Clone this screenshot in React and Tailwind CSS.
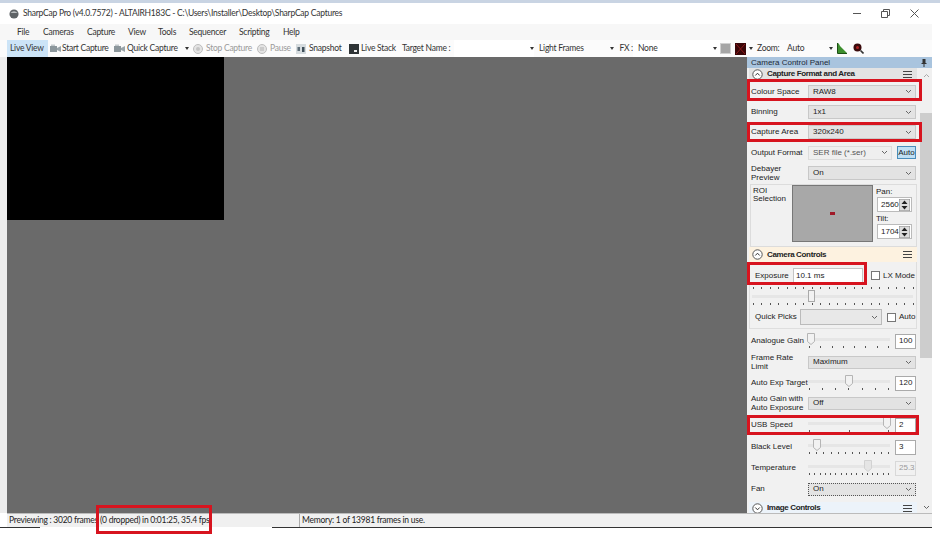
import React from "react";

const Cam = ({ dim }) => (
  <svg width="11" height="9" viewBox="0 0 11 9" className="shrink-0">
    <rect x="0" y="2" width="7" height="6" fill={dim ? "#a8b0b4" : "#8c979c"} />
    <path d="M7 4l4-2v6L7 6z" fill="#9aa5aa" />
    <rect x="1" y="0.5" width="4" height="1.5" fill="#c2c8cb" />
  </svg>
);
const Round = ({ children }) => (
  <svg width="10" height="10" viewBox="0 0 10 10" className="shrink-0">
    <circle cx="5" cy="5" r="4.5" fill="#e4e4e4" stroke="#bdbdbd" />
    {children}
  </svg>
);
const Arrow = () => <span className="block w-0 h-0 border-x-[2.5px] border-x-transparent border-t-[3px] border-t-[#333]" />;
const TI = ({ w, cn = "", children }) => <div className={"flex items-center shrink-0 h-full whitespace-nowrap " + cn} style={{ width: w }}>{children}</div>;

const Chevron = () => (
  <svg width="7" height="5" viewBox="0 0 7 5" className="shrink-0"><path d="M1 1l2.5 2.5L6 1" fill="none" stroke="#666" strokeWidth="1" /></svg>
);
const Combo = ({ w = "w-[108px]", h = "h-[14px]", children, dis, cn = "" }) => (
  <div className={`${w} ${h} ${cn} flex items-center justify-between pl-[3px] pr-[3px] border shrink-0 ${dis ? "bg-[#efefef] border-[#dcdcdc] text-[#555]" : "bg-[#e3e3e3] border-[#c8c8c8]"}`}>
    <span className="pl-[1px]">{children}</span><Chevron />
  </div>
);
const Row = ({ h, label, children, two }) => (
  <div className="flex items-center pl-[4px] shrink-0 whitespace-nowrap" style={{ height: h }}>
    <div className={`w-[57px] shrink-0 ${two ? "leading-[9px]" : ""}`}>{label}</div>
    {children}
  </div>
);
const Ticks = ({ w, n, cn = "" }) => (
  <div className={`flex justify-between ${cn}`} style={{ width: w }}>
    {Array.from({ length: n }).map((_, i) => <span key={i} className="block w-[1px] h-[2px] bg-[#555]" />)}
  </div>
);
const Thumb = ({ left, dim }) => (
  <svg width="8" height="12" viewBox="0 0 8 12" className="shrink-0" style={{ marginLeft: left }}>
    <path d="M0.5 0.5h7v8L4 11.5 0.5 8.5z" fill={dim ? "#e5e5e5" : "#f2f2f2"} stroke={dim ? "#d2d2d2" : "#b5b5b5"} />
  </svg>
);
const Slider = ({ at, n, val, dim, tw = 80 }) => (
  <div className="flex items-center">
    <div className="w-[82px] flex flex-col relative h-[17px]">
      <div className="h-[3px] bg-[#e6e6e6] mt-[5px] -mb-[8px] w-full" />
      <Thumb left={at} dim={dim} />
      <Ticks w={tw} n={n} cn="mt-[1px] ml-[1px]" />
    </div>
    <div className={`ml-[5px] w-[21px] h-[15px] border flex items-center pl-[3px] ${dim ? "border-[#d8d8d8] text-[#999]" : "border-[#aaa] bg-white"}`}>{val}</div>
  </div>
);
const Menu3 = ({ cn = "" }) => (
  <div className={`w-[9px] flex flex-col gap-[2px] ${cn}`}>
    <span className="h-[1px] bg-[#444]" /><span className="h-[1px] bg-[#444]" /><span className="h-[1px] bg-[#444]" />
  </div>
);
const SecHeader = ({ title, up = true, cn = "", h }) => (
  <div className={`flex items-center shrink-0 w-[168px] ml-[2px] pl-[3px] pr-[5px] justify-between ${cn}`} style={{ height: h }}>
    <div className="flex items-center gap-[4px]">
      <svg width="11" height="11" viewBox="0 0 11 11"><circle cx="5.5" cy="5.5" r="4.7" fill="#fff" stroke="#555" /><path d={up ? "M3.3 6.5L5.5 4.2 7.7 6.5" : "M3.3 4.5L5.5 6.8 7.7 4.5"} fill="none" stroke="#333" /></svg>
      <span className="font-bold tracking-[-0.35px] whitespace-nowrap">{title}</span>
    </div>
    <Menu3 />
  </div>
);
const Spin = ({ v }) => (
  <div className="w-[35px] h-[15px] ml-[1px] bg-white border border-[#bbb] flex items-center justify-between pl-[3px] pr-[1px]">
    <span>{v}</span>
    <svg width="11" height="12" viewBox="0 0 11 12"><rect width="11" height="12" fill="#ddd" stroke="#888" /><path d="M5.5 1.5L8.5 5h-6zM5.5 10.5L8.5 7h-6z" fill="#222" /></svg>
  </div>
);
const ui = { fontFamily: 'Lato, sans-serif', fontSize: 8.5, letterSpacing: "-0.25px" };

export default function App() {
  return (
    <div className="relative w-[940px] h-[535px] overflow-hidden bg-white text-[#222]" style={{ fontFamily: '"Liberation Sans", Arial, sans-serif', fontSize: 8 }}>
      <div className="h-[3px] bg-[#c9d4e3]" />
      <div className="h-[21px] flex items-center pl-[9px] w-[932px]">
        <svg width="10" height="10" viewBox="0 0 11 11"><circle cx="5.5" cy="5.5" r="5" fill="#5e6366" /><path d="M1.5 4.5Q5.5 0.5 9.5 4.5" fill="#b9bdbf" /></svg>
        <span className="ml-[4px] text-[#333] whitespace-nowrap" style={ui}>SharpCap Pro (v4.0.7572) - ALTAIRH183C - C:\Users\Installer\Desktop\SharpCap Captures</span>
        <div className="ml-auto flex items-center gap-[20px] pr-[13px]">
          <span className="block w-[8px] h-[1px] bg-[#555]" />
          <svg width="9" height="9" viewBox="0 0 9 9"><path d="M2.5 2.5V.5h6v6h-2M.5 2.5h6v6h-6z" fill="none" stroke="#555" /></svg>
          <svg width="9" height="9" viewBox="0 0 9 9"><path d="M.5.5l8 8M8.5.5l-8 8" stroke="#555" /></svg>
        </div>
      </div>
      <div className="h-[16px] w-[932px] bg-[#f7f7f7] flex items-center pl-[17px] text-[#333]" style={ui}>
        <span className="w-[26px]">File</span><span className="w-[44px]">Cameras</span><span className="w-[41px]">Capture</span><span className="w-[30px]">View</span><span className="w-[31px]">Tools</span><span className="w-[50px]">Sequencer</span><span className="w-[44px]">Scripting</span><span>Help</span>
      </div>
      <div className="h-[17px] w-[932px] flex items-center pl-[7px] text-[#333] bg-[#fbfbfb]" style={ui}>
        <TI w={41} cn="bg-[#cce4f7] pl-[3px]">Live View</TI>
        <TI w={66} cn="pl-[2px] gap-[1px]"><Cam />Start Capture</TI>
        <TI w={79} cn="gap-[2px]"><Cam />Quick Capture<span className="ml-[5px]"><Arrow /></span></TI>
        <TI w={64} cn="gap-[3px] text-[#9a9a9a]"><Round><circle cx="5" cy="5" r="2" fill="#c4c4c4" /></Round>Stop Capture</TI>
        <TI w={39} cn="gap-[3px] text-[#9a9a9a]"><Round><path d="M4 3v4M6 3v4" stroke="#b0b0b0" /></Round>Pause</TI>
        <TI w={53} cn="gap-[3px]"><svg width="10" height="10" viewBox="0 0 10 10" className="shrink-0"><rect width="10" height="10" fill="#d6dcdf" /><rect x="1.5" y="3" width="2.5" height="4" fill="#5d6d78" /><rect x="6" y="3" width="2.5" height="5" fill="#3f4f5a" /></svg>Snapshot</TI>
        <TI w={53} cn="gap-[2px]"><svg width="10" height="10" viewBox="0 0 10 10" className="shrink-0"><rect width="10" height="10" fill="#2f3436" /><rect x="5" y="6" width="3" height="2" fill="#eee" /></svg>Live Stack</TI>
        <TI w={52}>Target Name :</TI>
        <TI w={80} cn="bg-white justify-end"><Arrow /></TI>
        <TI w={5}></TI>
        <TI w={78}>Light Frames<span className="ml-[26px]"><Arrow /></span></TI>
        <TI w={16} cn="justify-end">FX :</TI>
        <TI w={87} cn="bg-white pl-[5px] justify-between pr-[3px]">None<Arrow /></TI>
        <TI w={15}><span className="block w-[11px] h-[11px] bg-[#a5a5a5] border border-[#cfcfcf]" /></TI>
        <TI w={19} cn="gap-[3px]"><svg width="11" height="12" viewBox="0 0 11 12" className="shrink-0"><rect width="11" height="12" fill="#3a0608" /><path d="M1 1l9 10M10 1L1 11" stroke="#8c1a1a" /></svg><Arrow /></TI>
        <TI w={3}></TI>
        <TI w={30}>Zoom:</TI>
        <TI w={49} cn="justify-between pr-[3px]">Auto<Arrow /></TI>
        <TI w={1}></TI>
        <TI w={16}><svg width="10" height="11" viewBox="0 0 10 11"><path d="M1 0v10h9L3 3 2 1z" fill="#3d8f2e" /><path d="M.5 0v10.5H10" stroke="#1d4f15" fill="none" /></svg></TI>
        <TI w={12}><svg width="11" height="11" viewBox="0 0 11 11"><circle cx="4.5" cy="4.5" r="4" fill="#3a0a0c" /><circle cx="4.5" cy="4.5" r="1.5" fill="#b02020" /><path d="M7.5 7.5l3 3" stroke="#333" strokeWidth="1.6" /></svg></TI>
      </div>

      <div className="h-[456px] flex">
        <div className="w-[7px] bg-[#ececec]" />
        <div className="w-[740px] bg-[#6a6a6a]">
          <div className="w-[217px] h-[163px] bg-black" />
        </div>
        <div className="w-[185px] bg-[#ededed] flex flex-col overflow-hidden">
          <div className="h-[11px] shrink-0 bg-[#a9c4de] flex items-center justify-between pl-[4px] pr-[5px]">
            <span className="text-[#1c2a38]">Camera Control Panel</span>
            <svg width="6" height="8" viewBox="0 0 6 8"><path d="M1.5 0h3v4h1v1H3.5v3h-1V5H.5V4h1z" fill="#333" /></svg>
          </div>
          <div className="flex flex-1 min-h-0">
            <div className="w-[173px] flex flex-col min-w-0 bg-[#f1f1f1]">
              <SecHeader title="Capture Format and Area" h={12} cn="bg-[#e3e3e3]" />
              <div className="h-[1px] shrink-0" />
              <Row h={21} label="Colour Space"><Combo>RAW8</Combo></Row>
              <Row h={20} label="Binning"><Combo>1x1</Combo></Row>
              <Row h={20} label="Capture Area"><Combo>320x240</Combo></Row>
              <Row h={21} label="Output Format">
                <Combo w="w-[84px]" dis>SER file (*.ser)</Combo>
                <div className="ml-[5px] w-[19px] h-[13px] bg-[#bfe0f5] border border-[#4a8dbb] flex items-center justify-center">Auto</div>
              </Row>
              <Row h={20} label={<>Debayer<br />Preview</>} two><Combo>On</Combo></Row>
              <div className="h-[1px] shrink-0" />
              <div className="h-[63px] shrink-0 ml-[3px] w-[167px] border border-[#dcdcdc] flex pl-[2px]">
                <div className="w-[39px] leading-[8px] pt-[2px] shrink-0">ROI<br />Selection</div>
                <div className="w-[81px] h-[57px] bg-[#a8a8a8] border border-[#777] shrink-0 flex items-center justify-center">
                  <span className="block w-[5px] h-[3px] bg-[#a01a28]" />
                </div>
                <div className="ml-[3px] flex flex-col pt-[2px]">
                  <div className="h-[10px] flex items-center">Pan:</div>
                  <Spin v="2560" />
                  <div className="h-[11px] mt-[1px] flex items-center">Tilt:</div>
                  <Spin v="1704" />
                </div>
              </div>
              <SecHeader title="Camera Controls" h={15} cn="bg-[#fdf2e0]" />
              <div className="h-[67px] shrink-0 ml-[2px] w-[168px] border border-[#dedede] border-t-0 px-[2px] flex flex-col whitespace-nowrap">
                <div className="h-[21px] mt-[3px] shrink-0 flex items-center">
                  <span className="w-[41px] pl-[3px] shrink-0">Exposure</span>
                  <div className="w-[70px] h-[15px] bg-white border border-[#c4c4c4] flex items-center pl-[2px] shrink-0">10.1 ms</div>
                  <span className="ml-[8px] w-[9px] h-[9px] bg-white border border-[#777] shrink-0" />
                  <span className="ml-[3px]">LX Mode</span>
                </div>
                <Ticks w={161} n={20} cn="mt-[1px] ml-[1px]" />
                <div className="relative h-[12px] mt-[1px]">
                  <div className="absolute top-[5px] left-0 w-[161px] h-[3px] bg-[#e6e6e6]" />
                  <div className="absolute left-[56px] top-0 w-[7px] h-[12px] bg-[#f2f2f2] border border-[#aaa]" />
                </div>
                <Ticks w={161} n={20} cn="mt-[1px] ml-[1px]" />
                <div className="flex items-center mt-[4px] h-[16px]">
                  <span className="w-[48px] pl-[3px] shrink-0">Quick Picks</span>
                  <div className="w-[82px] h-[16px] border border-[#bbb] bg-[#e8e8e8] flex items-center justify-end pr-[3px] shrink-0"><Chevron /></div>
                  <span className="ml-[5px] w-[9px] h-[9px] bg-white border border-[#777] shrink-0" />
                  <span className="ml-[3px]">Auto</span>
                </div>
              </div>
              <div className="h-[2px] shrink-0" />
              <Row h={20} label="Analogue Gain"><Slider at={-1} n={8} val="100" /></Row>
              <Row h={22} label={<>Frame Rate<br />Limit</>} two><Combo w="w-[108px]" h="h-[13px]">Maximum</Combo></Row>
              <Row h={20} label="Auto Exp Target"><Slider at={37} n={7} val="120" /></Row>
              <Row h={20} label={<>Auto Gain with<br />Auto Exposure</>} two><Combo h="h-[13px]">Off</Combo></Row>
              <div className="h-[2px] shrink-0" />
              <Row h={20} label="USB Speed"><Slider at={75} n={3} val="2" /></Row>
              <div className="h-[2px] shrink-0" />
              <Row h={20} label="Black Level"><Slider at={5} n={12} val="3" /></Row>
              <div className="h-[1px] shrink-0" />
              <Row h={20} label="Temperature"><Slider at={56} n={16} val="25.3" dim /></Row>
              <div className="h-[1px] shrink-0" />
              <Row h={20} label="Fan"><Combo h="h-[13px]" cn="!border-dotted !border-[#555]">On</Combo></Row>
              <div className="h-[3px] shrink-0" />
              <SecHeader title="Image Controls" up={false} h={12} cn="bg-[#ecf3fa]" />
            </div>
            <div className="w-[12px] bg-[#f0f0f0] flex flex-col items-center">
              <div className="h-[45px] w-full pt-[5px] flex justify-center"><svg width="7" height="5" viewBox="0 0 7 5"><path d="M1 4l2.5-2.5L6 4" fill="none" stroke="#aaa" /></svg></div>
              <div className="h-[245px] w-full bg-[#cdcdcd]" />
              <div className="mt-auto pb-[3px]"><Chevron /></div>
            </div>
          </div>
        </div>
      </div>

      <div className="h-[14px] w-[925px] ml-[7px] bg-[#f0f0f0] border-t border-[#bbb] flex items-center whitespace-nowrap" style={ui}>
        <span className="w-[90px] pl-[2px] shrink-0">Previewing : 3020 frames</span>
        <span className="w-[202px] pl-[3px] shrink-0">(0 dropped) in 0:01:25, 35.4 fps</span>
        <span className="pl-[2px] border-l border-[#aaa]">Memory: 1 of 13981 frames in use.</span>
      </div>
      <div className="h-[1px] w-[932px] flex justify-between">
        <span className="block w-[40px] bg-[#333]" />
        <span className="block w-[660px] bg-[#333]" />
      </div>

      <div className="absolute left-[747px] top-[79px] w-[175px] h-[22px] border-[3px] border-[#d7141f]" />
      <div className="absolute left-[747px] top-[122px] w-[175px] h-[20px] border-[3px] border-[#d7141f]" />
      <div className="absolute left-[747px] top-[262px] w-[120px] h-[23px] border-[3px] border-[#d7141f]" />
      <div className="absolute left-[747px] top-[415px] w-[172px] h-[20px] border-[3px] border-[#d7141f]" />
      <div className="absolute left-[96px] top-[505px] w-[116px] h-[29px] border-[3px] border-[#d7141f]" />
    </div>
  );
}
